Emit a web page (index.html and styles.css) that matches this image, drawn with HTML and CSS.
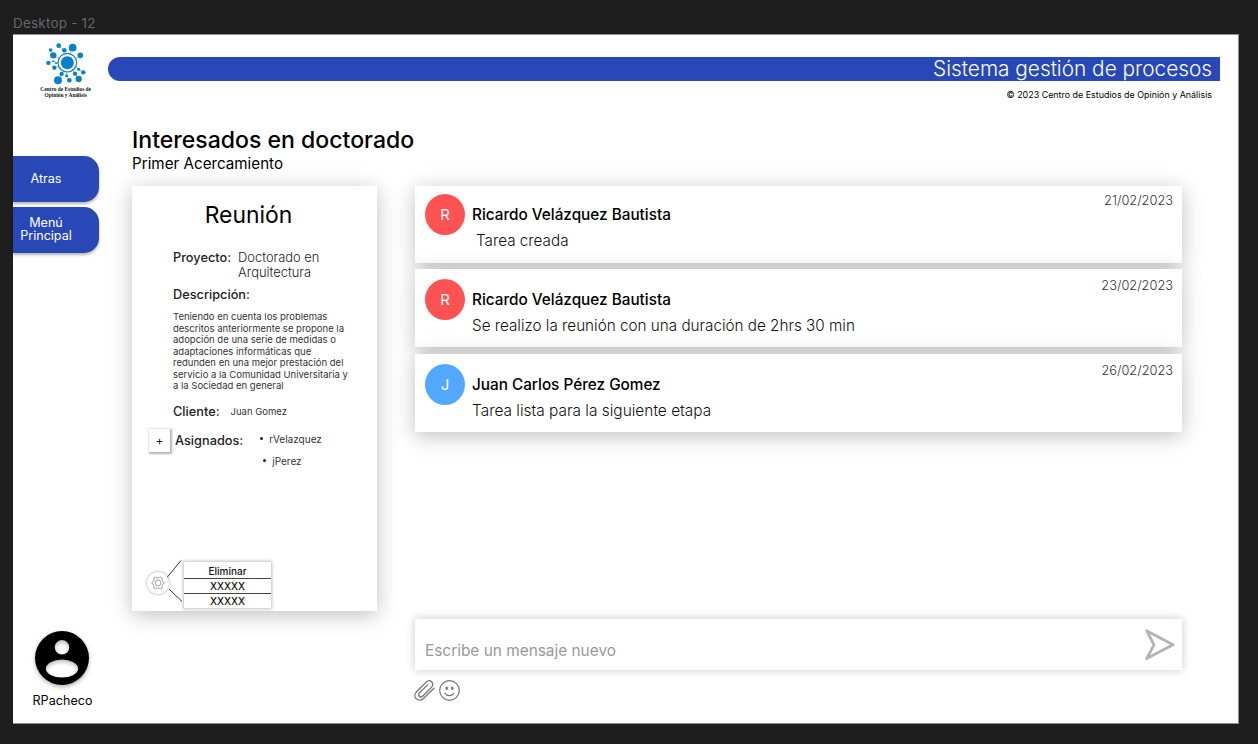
FILE: index.html
```html
<!DOCTYPE html>
<html lang="es">
<head>
<meta charset="utf-8">
<title>Sistema gestión de procesos</title>
<link rel="stylesheet" href="styles.css">
</head>
<body>
<div class="frame-label">Desktop - 12</div>
<div class="board">
  <aside class="sidebar">
    <svg class="logo" viewBox="114 120 162 180" role="img" aria-label="Centro de Estudios de Opinión y Análisis">
      <g stroke="#0a80c8" stroke-width="1.5" fill="none">
        <path d="M176 137L193 151M218 143L210 162M152 150L160 166L180 176M241 166L228 176M145 188L160 184L174 190M163 203L176 198M185 222L174 241M185 222L192 212M200 227L200 214M208 241L200 227M236 237L225 221L216 208M250 217L236 208L226 200"/>
      </g>
      <g fill="#0a80c8">
        <circle cx="202" cy="188" r="19.5"/>
        <circle cx="176" cy="137" r="7"/><circle cx="218" cy="143" r="11.5"/>
        <circle cx="152" cy="150" r="5.5"/><circle cx="193" cy="151" r="7"/>
        <circle cx="160" cy="166" r="9.5"/><circle cx="241" cy="166" r="8.5"/>
        <circle cx="145" cy="189" r="6.5"/><circle cx="160" cy="184" r="3"/><circle cx="168" cy="190" r="3"/>
        <circle cx="163" cy="203" r="6.5"/><circle cx="185" cy="222" r="6.5"/>
        <circle cx="200" cy="227" r="4.5"/><circle cx="174" cy="241" r="12"/>
        <circle cx="208" cy="241" r="7"/><circle cx="225" cy="221" r="6.5"/>
        <circle cx="236" cy="208" r="4.5"/><circle cx="250" cy="217" r="6.5"/>
        <circle cx="236" cy="237" r="9.5"/>
      </g>
      <circle cx="202" cy="188" r="28" fill="none" stroke="#0a80c8" stroke-width="3.5"/>
      <text class="logo-text" x="197" y="273">Centro de Estudios de</text>
      <text class="logo-text" x="197" y="292">Opinión y Análisis</text>
    </svg>
    <nav class="nav">
      <a class="nav-button">Atras</a>
      <a class="nav-button two-line">Menú<br>Principal</a>
    </nav>
    <div class="user">
      <svg class="user-icon" viewBox="0 0 54 54">
        <path fill="#000" fill-rule="evenodd" d="M27 0a27 27 0 1 1 0 54a27 27 0 1 1 0-54zM27 9a7.300 7.300 0 1 0 0 14.600a7.300 7.300 0 1 0 0-14.600zM27 28.600a16.200 9 0 1 0 0 18a16.200 9 0 1 0 0-18z"/>
      </svg>
      <span class="user-name">RPacheco</span>
    </div>
  </aside>
  <main class="main">
    <header class="banner"><span class="banner-title">Sistema gestión de procesos</span></header>
    <div class="copyright"><span>© 2023 Centro de Estudios de Opinión y Análisis</span></div>
    <h1 class="title"><span>Interesados en doctorado</span></h1>
    <div class="subtitle"><span>Primer Acercamiento</span></div>
    <div class="columns">
      <section class="card">
        <h2 class="card-title"><span>Reunión</span></h2>
        <div class="field project"><span class="label">Proyecto:</span><span class="project-name">Doctorado en<br>Arquitectura</span></div>
        <div class="label description-label"><span>Descripción:</span></div>
        <p class="description">Teniendo en cuenta los problemas<br>descritos anteriormente se propone la<br>adopción de una serie de medidas o<br>adaptaciones informáticas que<br>redunden en una mejor prestación del<br>servicio a la Comunidad Universitaria y<br>a la Sociedad en general</p>
        <div class="field client"><span class="label">Cliente:</span><span class="small">Juan Gomez</span></div>
        <div class="assigned">
          <span class="add">+</span>
          <span class="label">Asignados:</span>
          <ul class="people"><li class="small">rVelazquez</li><li class="small second">jPerez</li></ul>
        </div>
        <div class="options">
          <span class="gear">
            <svg width="14" height="14" viewBox="0 0 14 14" fill="none" stroke="#777" stroke-width=".7" stroke-linejoin="round">
              <path d="M4.200 1.200L5.600 1.800H8.400L9.800 1.200L11.200 2.300L11 4L12.200 6.200L13.400 7L12.200 7.800L11 10L11.200 11.700L9.800 12.800L8.400 12.200H5.600L4.200 12.800L2.800 11.700L3 10L1.800 7.800L.6 7L1.800 6.200L3 4L2.800 2.300Z"/>
              <circle cx="7" cy="7" r="2.900"/>
            </svg>
          </span>
          <svg class="connector" width="16" height="43" viewBox="0 0 16 43" stroke="#333" stroke-width="1"><path d="M0 17.500L14 .5M2 29L15 41.500"/></svg>
          <div class="menu"><span>Eliminar</span><span>XXXXX</span><span>XXXXX</span></div>
        </div>
      </section>
      <section class="thread">
        <article class="message">
          <span class="avatar red">R</span>
          <div class="body"><div class="author"><span>Ricardo Velázquez Bautista</span></div><div class="text indented"><span>Tarea creada</span></div></div>
          <time class="date">21/02/2023</time>
        </article>
        <article class="message later">
          <span class="avatar red">R</span>
          <div class="body"><div class="author"><span>Ricardo Velázquez Bautista</span></div><div class="text"><span>Se realizo la reunión con una duración de 2hrs 30 min</span></div></div>
          <time class="date">23/02/2023</time>
        </article>
        <article class="message later last">
          <span class="avatar blue">J</span>
          <div class="body"><div class="author"><span>Juan Carlos Pérez Gomez</span></div><div class="text wide"><span>Tarea lista para la siguiente etapa</span></div></div>
          <time class="date">26/02/2023</time>
        </article>
        <div class="composer">
          <span class="placeholder">Escribe un mensaje nuevo</span>
          <svg class="send" width="30" height="32" viewBox="0 0 30 32" fill="none" stroke="#b3b3b3" stroke-width="2.800" stroke-linejoin="round"><path d="M1.700 1.700L28 15.800L1.700 29.500L9 15.800Z"/></svg>
        </div>
        <div class="tools">
          <svg width="21" height="21" viewBox="0 0 21 21" fill="none" stroke="#777" stroke-width="1.300" stroke-linecap="round"><path d="M19.900 8.200L9.700 18.300C7.500 20.500 4.200 20.800 2.300 18.900S.4 14 2.600 11.700L12 2.300C13.700.6 16 .3 17.600 1.800S19 5.700 17.400 7.400L8.800 16C7.700 17.100 6.300 17.300 5.300 16.300S4.500 13.900 5.600 12.800L13.500 4.900"/></svg>
          <svg width="21" height="21" viewBox="0 0 21 21" fill="none" stroke="#777" stroke-width="1.200" stroke-linecap="round"><circle cx="10.500" cy="10.500" r="9.800"/><path d="M6 13.200C8 16.400 13 16.400 15 13.200"/><ellipse cx="7.700" cy="8.300" rx=".7" ry="1.200" fill="#777"/><ellipse cx="13.300" cy="8.300" rx=".7" ry="1.200" fill="#777"/></svg>
        </div>
      </section>
    </div>
  </main>
</div>
</body>
</html>
```
FILE: styles.css
```css
* { box-sizing: border-box; }

body {
  margin: 0;
  width: 1258px;
  height: 744px;
  overflow: hidden;
  background: #1e1e1e;
  color: #000;
  font-family: Inter, "Liberation Sans", sans-serif;
  white-space: nowrap;
}

h1, h2, p, ul { margin: 0; padding: 0; font-weight: 400; }
svg { display: block; flex: none; }

.frame-label {
  height: 34px;
  padding: 15px 0 0 13px;
  font-size: 13.400px;
  line-height: 16px;
  letter-spacing: .25px;
  color: #666;
}

.board {
  display: flex;
  width: 1226px;
  height: 690px;
  margin-left: 13px;
  background: #fff;
  border: 1px solid #8f8f8f;
  border-left: 0;
}

/* Sidebar */
.sidebar { display: flex; flex-direction: column; width: 95px; flex: none; }
.logo { width: 54px; height: 60px; margin: 5px 0 0 25px; overflow: visible; }
.logo-text { font: bold 16.200px "Liberation Serif", serif; text-anchor: middle; fill: #111; }

.nav { display: flex; flex-direction: column; gap: 5px; margin-top: 56px; }
.nav-button {
  display: flex;
  align-items: center;
  justify-content: center;
  width: 86px;
  height: 46px;
  padding-right: 20px;
  padding-bottom: 1px;
  border-radius: 0 15px 15px 0;
  background: #2848b8;
  box-shadow: 0 2px 3px rgba(0, 0, 0, .3);
  color: #fff;
  font-size: 12.600px;
  line-height: 13px;
  text-align: center;
}
.nav-button.two-line { padding-bottom: 3px; }

.user {
  display: flex;
  flex-direction: column;
  align-items: center;
  width: 98px;
  margin-top: auto;
  padding-bottom: 14px;
}
.user-icon { width: 54px; height: 54px; filter: drop-shadow(0 2px 2px rgba(0, 0, 0, .3)); }
.user-name { margin-top: 8px; padding-left: 1px; font-size: 12.600px; line-height: 16px; }

/* Main area */
.main { flex: 1; padding: 22px 18px 0 0; }
.banner {
  display: flex;
  align-items: center;
  justify-content: flex-end;
  height: 24px;
  padding-right: 8px;
  border-radius: 12px 0 0 12px;
  background: #2848b8;
  color: #fff;
  font-size: 20.800px;
  line-height: 24px;
  font-weight: 300;
}
.copyright {
  padding: 8px 8px 0 0;
  text-align: right;
  font-size: 8.920px;
  line-height: 12px;
}
.title { margin: 24px 0 0 24px; font-size: 23.050px; line-height: 30px; font-weight: 500; }
.subtitle { margin: 0 0 0 24px; font-size: 15.200px; line-height: 18px; }

.columns { display: flex; gap: 38px; margin: 13px 0 0 24px; }

/* Task card */
.card {
  display: flex;
  flex-direction: column;
  width: 245px;
  height: 425px;
  padding: 14px 0 3px 41px;
  background: #fff;
  box-shadow: 0 4px 20px rgba(0, 0, 0, .25);
  color: #222;
}
.card-title { width: 151px; text-align: center; font-size: 22.900px; line-height: 30px; color: #000; }
.label { font-size: 12.750px; line-height: 16px; font-weight: 500; }
.field { display: flex; }
.project { gap: 7px; margin-top: 20px; }
.project-name { font-size: 12.900px; line-height: 15px; font-weight: 350; }
.description-label { margin-top: 7px; }
.description { margin-top: 8px; font-size: 9.500px; line-height: 11.500px; font-weight: 400; color: #333; }
.client { align-items: center; gap: 11px; margin-top: 12px; }
.small { font-size: 10px; line-height: 14px; font-weight: 400; color: #333; }
.client .small { font-size: 9.500px; }

.assigned { display: flex; margin: 9px 0 0 -24px; }
.add {
  display: grid;
  place-items: center;
  width: 21px;
  height: 23px;
  margin-right: 5px;
  background: #fff;
  box-shadow: 1px 1px 2px 1px rgba(0, 0, 0, .3);
  font-size: 12px;
}
.assigned .label { margin-top: 4px; }
.people { margin: 3px 0 0 27px; list-style: none; }
.people li { display: flex; align-items: center; gap: 6px; margin-left: -10px; }
.people li::before { width: 3px; height: 3px; border-radius: 50%; background: #222; content: ""; }
.people .second { margin: 8px 0 0 -7px; }

.options { display: flex; align-items: center; margin: auto 0 0 -26px; }
.gear {
  display: grid;
  place-items: center;
  width: 22px;
  height: 22px;
  margin-top: -4px;
  border-radius: 50%;
  box-shadow: 0 0 3px rgba(0, 0, 0, .4);
}
.connector { margin: -7px 0 0 -2px; }
.menu {
  width: 87px;
  height: 46px;
  margin-left: 1px;
  box-shadow: 0 0 3px 1px rgba(0, 0, 0, .25);
  color: #111;
  font-size: 10px;
  line-height: 14px;
  font-weight: 500;
  text-align: center;
}
.menu span { display: block; height: 15px; border-top: 1px solid #444; }
.menu span:first-child { height: 16px; padding-top: 2px; border: 0; }

/* Conversation */
.thread { display: flex; flex-direction: column; width: 767px; }
.message {
  display: flex;
  height: 77px;
  padding: 8px 9px 0 10px;
  background: #fff;
  box-shadow: 0 4px 20px rgba(0, 0, 0, .25);
}
.message.later { height: 78px; margin-top: 6px; padding-top: 10px; }
.message.last { margin-top: 7px; }
.avatar {
  display: grid;
  place-items: center;
  flex: none;
  width: 40px;
  height: 41px;
  border-radius: 50%;
  color: #fff;
  font-size: 15px;
}
.red { background: #ff5252; }
.blue { background: #52a8ff; }
.body { flex: 1; padding: 11px 0 0 7px; }
.author { font-size: 15.300px; line-height: 20px; font-weight: 500; }
.text { margin-top: 6px; font-size: 15.250px; line-height: 20px; font-weight: 300; color: #111; }
.wide { font-size: 15.450px; }
.indented { padding-left: 4px; }
.date { margin-top: -1px; font-size: 12.800px; line-height: 16px; font-weight: 300; color: #333; }

.composer {
  display: flex;
  align-items: center;
  justify-content: space-between;
  height: 51px;
  margin-top: 187px;
  padding: 0 7px 0 10px;
  box-shadow: 0 0 9px rgba(0, 0, 0, .22);
}
.placeholder { padding-top: 13px; font-size: 15.400px; line-height: 20px; color: #999; }
.tools { display: flex; gap: 4px; margin: 10px 0 0 -1px; }
```
